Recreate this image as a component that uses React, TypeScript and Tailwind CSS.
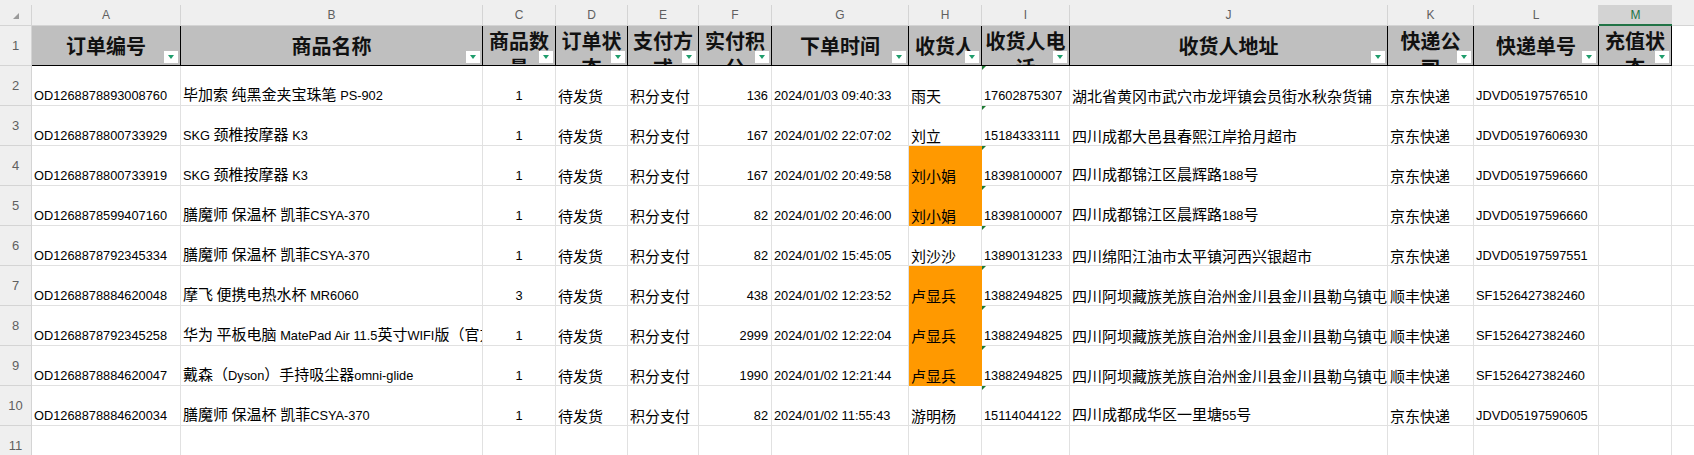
import React from "react";

const CJK = /([\u3000-\u303f\u4e00-\u9fff\uff00-\uffef]+)/;

function Txt({ s }: { s: string }) {
  const parts = s.split(CJK);
  return (
    <>
      {parts.map((p, i) =>
        !p ? null : CJK.test(p) ? (
          <span key={i} className="font-['Noto_Sans_CJK_SC',sans-serif] text-[15px]">{p}</span>
        ) : (
          <span key={i} className="font-['Liberation_Sans','Noto_Sans_CJK_SC',sans-serif] text-[12.8px]">{p}</span>
        )
      )}
    </>
  );
}

const letters = ["A", "B", "C", "D", "E", "F", "G", "H", "I", "J", "K", "L", "M"];

const headers: string[][] = [
  ["订单编号"],
  ["商品名称"],
  ["商品数", "量"],
  ["订单状", "态"],
  ["支付方", "式"],
  ["实付积", "分"],
  ["下单时间"],
  ["收货人"],
  ["收货人电", "话"],
  ["收货人地址"],
  ["快递公", "司"],
  ["快递单号"],
  ["充值状", "态"],
];

// alignment per column: l / c / r
const align = ["l", "l", "c", "l", "l", "r", "l", "l", "l", "l", "l", "l", "l"];

const rows: { c: string[]; orange?: boolean }[] = [
  { c: ["OD1268878893008760", "毕加索 纯黑金夹宝珠笔 PS-902", "1", "待发货", "积分支付", "136", "2024/01/03 09:40:33", "雨天", "17602875307", "湖北省黄冈市武穴市龙坪镇会员街水秋杂货铺", "京东快递", "JDVD05197576510", ""] },
  { c: ["OD1268878800733929", "SKG 颈椎按摩器 K3", "1", "待发货", "积分支付", "167", "2024/01/02 22:07:02", "刘立", "15184333111", "四川成都大邑县春熙江岸拾月超市", "京东快递", "JDVD05197606930", ""] },
  { c: ["OD1268878800733919", "SKG 颈椎按摩器 K3", "1", "待发货", "积分支付", "167", "2024/01/02 20:49:58", "刘小娟", "18398100007", "四川成都锦江区晨辉路188号", "京东快递", "JDVD05197596660", ""], orange: true },
  { c: ["OD1268878599407160", "膳魔师 保温杯 凯菲CSYA-370", "1", "待发货", "积分支付", "82", "2024/01/02 20:46:00", "刘小娟", "18398100007", "四川成都锦江区晨辉路188号", "京东快递", "JDVD05197596660", ""], orange: true },
  { c: ["OD1268878792345334", "膳魔师 保温杯 凯菲CSYA-370", "1", "待发货", "积分支付", "82", "2024/01/02 15:45:05", "刘沙沙", "13890131233", "四川绵阳江油市太平镇河西兴银超市", "京东快递", "JDVD05197597551", ""] },
  { c: ["OD1268878884620048", "摩飞 便携电热水杯 MR6060", "3", "待发货", "积分支付", "438", "2024/01/02 12:23:52", "卢显兵", "13882494825", "四川阿坝藏族羌族自治州金川县金川县勒乌镇屯", "顺丰快递", "SF1526427382460", ""], orange: true },
  { c: ["OD1268878792345258", "华为 平板电脑 MatePad Air 11.5英寸WIFI版（官方标配）", "1", "待发货", "积分支付", "2999", "2024/01/02 12:22:04", "卢显兵", "13882494825", "四川阿坝藏族羌族自治州金川县金川县勒乌镇屯", "顺丰快递", "SF1526427382460", ""], orange: true },
  { c: ["OD1268878884620047", "戴森（Dyson）手持吸尘器omni-glide", "1", "待发货", "积分支付", "1990", "2024/01/02 12:21:44", "卢显兵", "13882494825", "四川阿坝藏族羌族自治州金川县金川县勒乌镇屯", "顺丰快递", "SF1526427382460", ""], orange: true },
  { c: ["OD1268878884620034", "膳魔师 保温杯 凯菲CSYA-370", "1", "待发货", "积分支付", "82", "2024/01/02 11:55:43", "游明杨", "15114044122", "四川成都成华区一里塘55号", "京东快递", "JDVD05197590605", ""] },
];

function Dropdown() {
  return (
    <div className="absolute right-[2px] bottom-[2px] w-[14px] h-[12px] bg-white flex items-center justify-center">
      <div className="w-0 h-0 border-l-[3.5px] border-r-[3.5px] border-t-[4px] border-l-transparent border-r-transparent border-t-[#1f9d6c]" />
    </div>
  );
}

function RowHead({ n }: { n: number }) {
  return (
    <div className="bg-[#efefef] border-r border-b border-[#d4d4d4] flex items-center justify-center text-[13px] text-[#5f5f5f] font-['Liberation_Sans',sans-serif]">
      {n}
    </div>
  );
}

export default function App() {
  return (
    <div className="w-[1694px] h-[455px] overflow-hidden bg-white">
      <div className="grid grid-cols-[32px_149px_302px_73px_72px_71px_73px_137px_73px_88px_318px_86px_125px_73px_1fr] grid-rows-[26px_repeat(11,40px)]">
        {/* column letters */}
        <div className="bg-[#efefef] pt-[5px] border-b border-[#d4d4d4]">
          <div className="h-full border-r border-[#d4d4d4] relative">
            <div className="absolute left-[13px] top-[8px] w-0 h-0 border-b-[6px] border-l-[6px] border-b-[#9a9a9a] border-l-transparent" />
          </div>
        </div>
        {letters.map((l) =>
          l === "M" ? (
            <div key={l} className="bg-[#efefef] pt-[5px]">
              <div className="h-full bg-[#d3d3d3] border-b-2 border-[#217346] flex items-center justify-center text-[12px] text-[#217346] font-['Liberation_Sans',sans-serif]">
                {l}
              </div>
            </div>
          ) : (
            <div key={l} className="bg-[#efefef] pt-[5px] border-b border-[#d4d4d4]">
              <div className="h-full border-r border-[#d4d4d4] flex items-center justify-center text-[12px] text-[#5f5f5f] font-['Liberation_Sans',sans-serif]">
                {l}
              </div>
            </div>
          )
        )}
        <div className="bg-[#efefef] border-b border-[#d4d4d4]" />

        {/* header row */}
        <RowHead n={1} />
        {headers.map((h, i) => (
          <div
            key={i}
            className={`relative bg-[#bfbfbf] border-r border-b border-black overflow-hidden font-['Noto_Sans_CJK_SC',sans-serif] font-bold text-[20px] text-[#111] ${
              h.length > 1 ? "flex flex-col items-center pt-[1px] leading-[27px]" : "flex items-center justify-center"
            }`}
          >
            {h.map((line, j) => (
              <div key={j}>{line}</div>
            ))}
            <Dropdown />
          </div>
        ))}
        <div className="border-b border-[#e1e1e1]" />

        {/* data */}
        {rows.map((r, ri) => (
          <React.Fragment key={ri}>
            <RowHead n={ri + 2} />
            {r.c.map((v, ci) => {
              const isOrange = r.orange && ci === 7;
              return (
                <div
                  key={ci}
                  className={`relative flex items-end px-[2px] overflow-hidden whitespace-nowrap font-['Noto_Sans_CJK_SC',sans-serif] text-[15px] leading-[18px] text-black border-r border-b ${
                    isOrange ? "bg-[#ff9900] border-[#ff9900]" : "border-[#e1e1e1]"
                  } ${align[ci] === "c" ? "justify-center" : align[ci] === "r" ? "justify-end pr-[3px]" : "justify-start"}`}
                >
                  {ci === 8 && (
                    <div className="absolute left-[-1px] top-0 w-0 h-0 border-t-[5px] border-r-[5px] border-t-[#1e7b34] border-r-transparent" />
                  )}
                  <span>
                    <Txt s={v} />
                  </span>
                </div>
              );
            })}
            <div className="border-b border-[#e1e1e1]" />
          </React.Fragment>
        ))}

        {/* empty row 11 */}
        <RowHead n={11} />
        {letters.map((l) => (
          <div key={l} className="border-r border-b border-[#e1e1e1]" />
        ))}
        <div className="border-b border-[#e1e1e1]" />
      </div>
    </div>
  );
}
